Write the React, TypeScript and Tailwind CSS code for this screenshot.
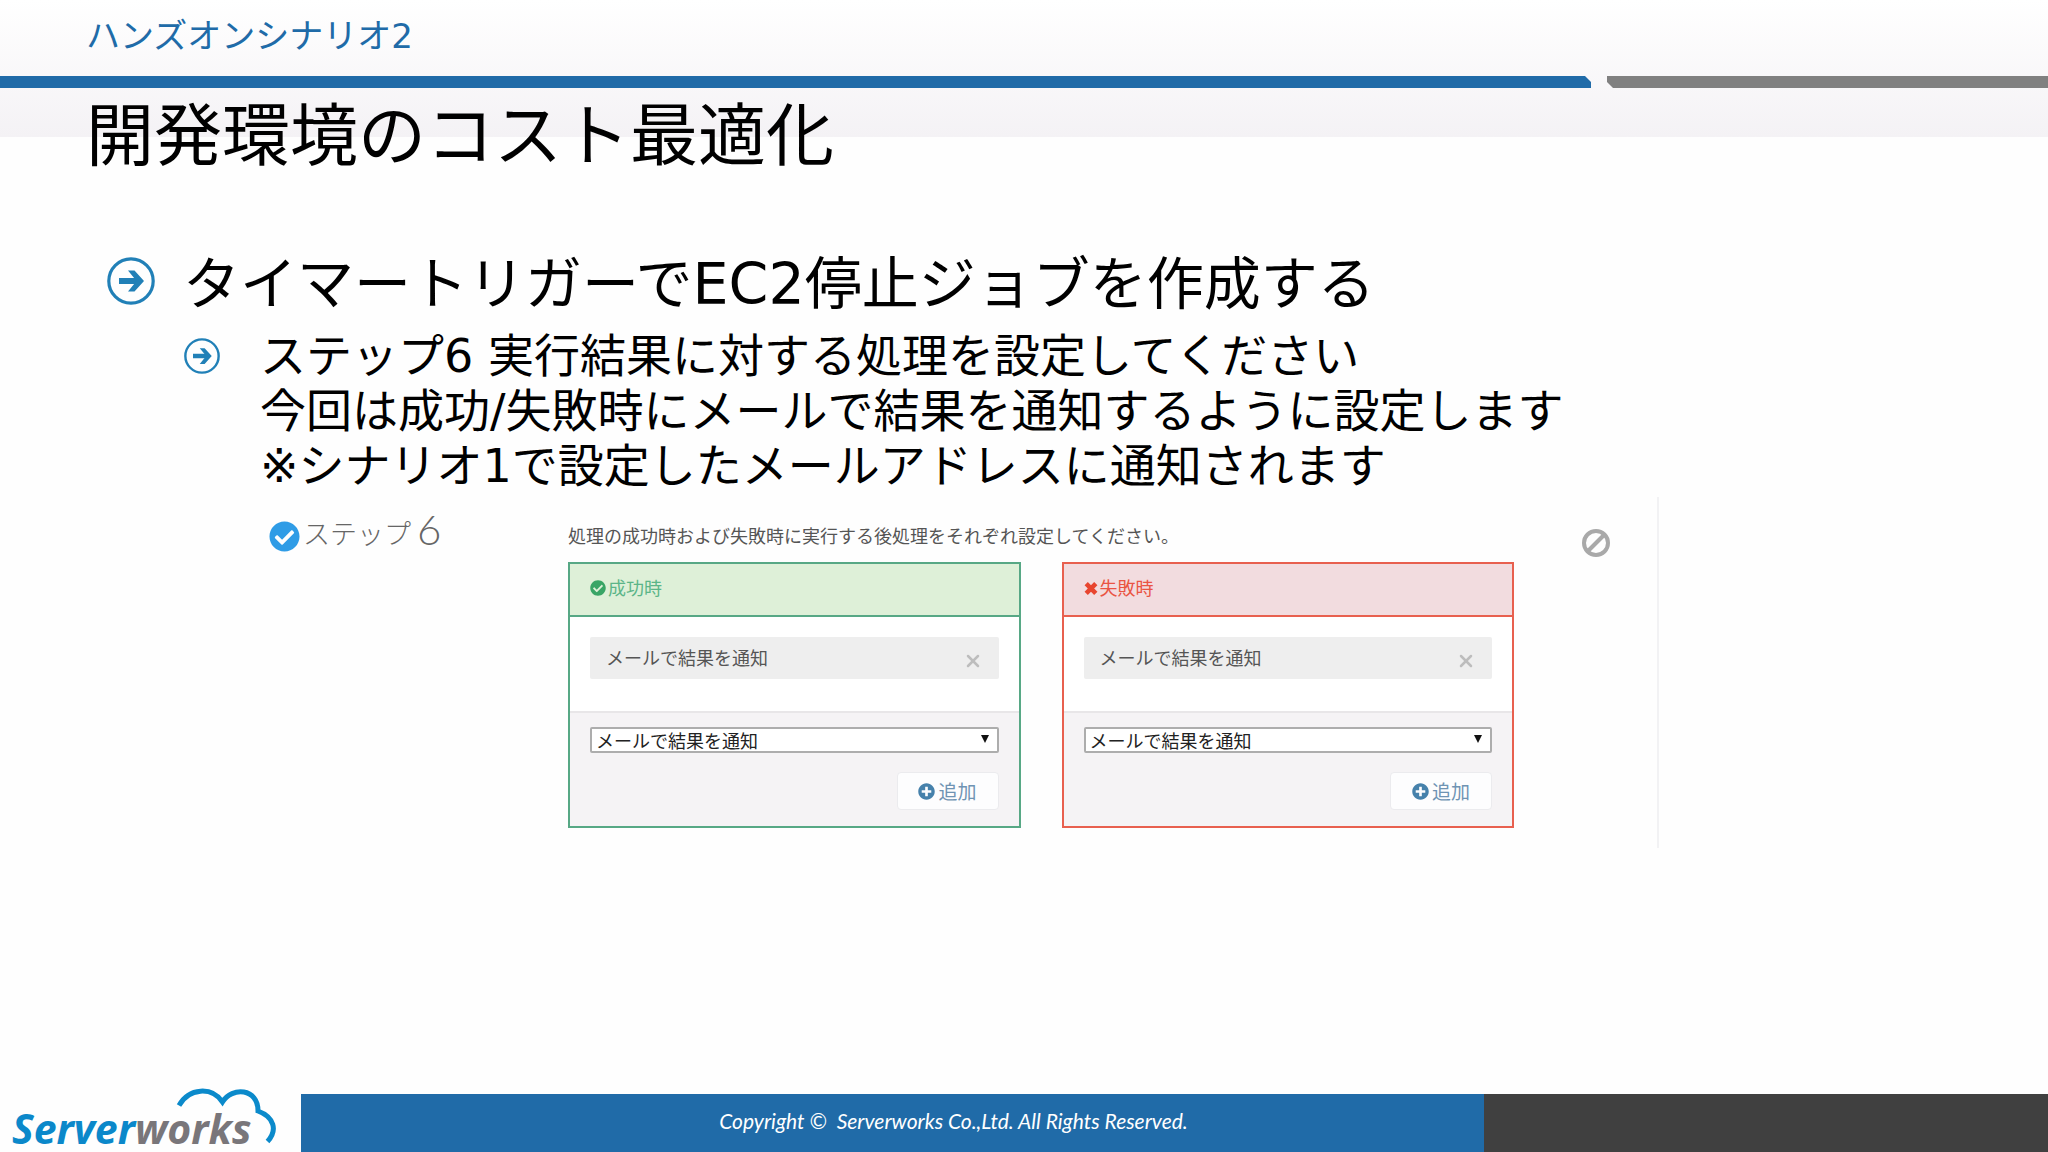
import React from 'react';
import { FaCheckCircle, FaPlusCircle } from 'react-icons/fa';
import { X } from 'lucide-react';

interface ResultPanelProps {
  id: string;
  title: string;
  icon: React.ReactNode;
  borderClass: string;
  headerClass: string;
}

const ACTION = 'メールで結果を通知';

const ArrowBullet: React.FC<{ className: string }> = ({ className }) => (
  <svg viewBox="0 0 48 48" className={className} fill="none" stroke="#2180b7" aria-hidden="true">
    <circle cx="24" cy="24" r="22.2" strokeWidth="3.2" />
    <path d="M12 24h21" strokeWidth="6" />
    <path d="M21 13.5H27.5L37 24L27.5 34.5H21L29.5 24Z" fill="#2180b7" stroke="none" />
  </svg>
);

const BanIcon: React.FC = () => (
  <svg viewBox="0 0 28 28" className="h-7 w-7" fill="none" stroke="#a9a9a9" strokeWidth="4" aria-hidden="true">
    <circle cx="14" cy="14" r="12" />
    <path d="M5.5 22.5L22.5 5.5" />
  </svg>
);

const CrossIcon: React.FC = () => (
  <svg viewBox="0 0 14 16" className="h-4 w-[14px]" fill="none" stroke="#e8452f" strokeWidth="4.6" aria-hidden="true">
    <path d="M2.2 3.7L11.8 13.3M11.8 3.7L2.2 13.3" />
  </svg>
);

const Logo: React.FC = () => (
  <div className="relative flex items-end pb-1 pl-3">
    <span className="font-['Noto_Sans','Open_Sans',sans-serif] text-[41px] leading-[40px] font-bold italic text-[#0b88ca]">
      Server<span className="text-[#79767a]">works</span>
    </span>
    <svg
      viewBox="0 0 320 82"
      className="absolute bottom-0 left-0 h-[82px] w-[320px]"
      fill="none"
      stroke="#0b8acb"
      strokeWidth="5"
      strokeLinejoin="miter"
      aria-hidden="true"
    >
      <path d="M179 35.5C189 17.5 212 16.5 222.5 32C232 16.5 258 18 258 41C274 47 278 60 267.5 71.5" />
    </svg>
  </div>
);

const ResultPanel: React.FC<ResultPanelProps> = ({ id, title, icon, borderClass, headerClass }) => (
  <section className={`min-w-0 flex-1 border-2 bg-white ${borderClass}`}>
    <h4 className={`flex h-[53px] items-center gap-[2px] border-b-2 px-5 pb-1 text-[18px] ${borderClass} ${headerClass}`}>
      {icon}
      {title}
    </h4>
    <div className="px-5 pt-5 pb-8">
      <div className="flex h-[42px] items-center justify-between rounded-xs bg-[#eeeeee] px-4 pb-[2px] text-[18px] text-[#555555]">
        {ACTION}
        <button type="button" aria-label="削除" className="pt-2 text-[#bdbdbd]">
          <X size={20} strokeWidth={3} />
        </button>
      </div>
    </div>
    <div className="flex flex-col items-end gap-[19px] border-t-2 border-[#e8e6e8] bg-[#f5f3f5] px-5 pt-[14px] pb-4">
      <div className="relative w-full">
        <select
          id={id}
          aria-label={title}
          className="block h-[26px] w-full appearance-none rounded-xs border-2 border-[#adadad] bg-white pl-1 text-[18px] leading-[22px] text-[#222222]"
        >
          <option>{ACTION}</option>
        </select>
        <svg viewBox="0 0 8 8" className="pointer-events-none absolute top-2 right-[10px] h-2 w-2" aria-hidden="true">
          <path d="M0 0H8L4 8Z" fill="#111111" />
        </svg>
      </div>
      <button
        type="button"
        className="flex h-[38px] w-[102px] items-center justify-center gap-[3px] rounded-sm border border-[#ebebee] bg-[#fdfdfe] text-[19px] text-[#6f93b3]"
      >
        <FaPlusCircle size={17} className="text-[#4681ab]" />
        追加
      </button>
    </div>
  </section>
);

export default function App() {
  return (
    <div className="flex min-h-screen flex-col bg-[#fefefe] bg-linear-to-b from-white to-[#f4f2f5] bg-[length:100%_137px] bg-no-repeat font-['DejaVu_Sans','Noto_Sans_CJK_JP',sans-serif] text-black">
      <header>
        <p className="h-[76px] px-[86px] pt-[10px] text-[34px] leading-[52px] text-[#206ba8]">ハンズオンシナリオ2</p>
        <div className="grid grid-cols-[1591fr_441fr] gap-4">
          <div className="h-3 bg-[#206ba8] [clip-path:polygon(0_0,calc(100%-6px)_0,100%_6px,100%_100%,0_100%)]" />
          <div className="h-3 bg-[#808080] [clip-path:polygon(0_0,100%_0,100%_100%,6px_100%,0_6px)]" />
        </div>
        <h1 className="px-[86px] text-[68px] leading-[98px]">開発環境のコスト最適化</h1>
      </header>

      <main className="flex-1 pt-[62px]">
        <div className="flex items-start gap-7 pl-[107px]">
          <ArrowBullet className="mt-[9px] h-12 w-12 shrink-0" />
          <h2 className="text-[57px] leading-[72px]">タイマートリガーでEC2停止ジョブを作成する</h2>
        </div>
        <div className="mt-[9px] flex items-start gap-10 pl-[184px]">
          <ArrowBullet className="mt-[9px] h-9 w-9 shrink-0" />
          <p className="text-[46px] leading-[55px]">
            ステップ6 実行結果に対する処理を設定してください
            <br />
            今回は成功/失敗時にメールで結果を通知するように設定します
            <br />
            ※シナリオ1で設定したメールアドレスに通知されます
          </p>
        </div>

        {/* Step form */}
        <div className="mt-[3px] ml-[261px] flex max-w-[1398px] items-start border-r-2 border-[#f2f2f4] pb-5 font-['Noto_Sans_CJK_JP',sans-serif]">
          <h3 className="flex w-[307px] shrink-0 items-start pt-[14px] pl-2 text-[27px] leading-[44px] font-light text-[#666666]">
            <FaCheckCircle size={31} className="mt-[10px] mr-[3px] text-[#2f9ce6]" />
            ステップ
            <span className="pl-[6px] font-['Lato',sans-serif] text-[42px] leading-[36px]">6</span>
          </h3>
          <div className="min-w-0 flex-1 pt-6">
            <p className="text-[18px] leading-[28px] text-[#555555]">
              処理の成功時および失敗時に実行する後処理をそれぞれ設定してください。
            </p>
            <div className="mt-[13px] flex gap-[41px]">
              <ResultPanel
                id="on-success"
                title="成功時"
                icon={<FaCheckCircle size={16} className="text-[#39a566]" />}
                borderClass="border-[#57a885]"
                headerClass="bg-[#def0d8] text-[#5bb588]"
              />
              <ResultPanel
                id="on-failure"
                title="失敗時"
                icon={<CrossIcon />}
                borderClass="border-[#e8604f]"
                headerClass="bg-[#f2dcdf] text-[#ea5443]"
              />
            </div>
          </div>
          <div className="flex w-[143px] shrink-0 justify-end pt-8 pr-[47px]">
            <BanIcon />
          </div>
        </div>
      </main>

      <footer className="grid h-[58px] grid-cols-[301px_1183fr_564fr] items-stretch">
        <Logo />
        <div className="flex items-center justify-center bg-[#206ba8] pb-1 pl-[122px] font-['Lato',sans-serif] text-[21px] whitespace-pre text-white italic">
          {'Copyright ©  Serverworks Co.,Ltd. All Rights Reserved.'}
        </div>
        <div className="bg-[#404040]" />
      </footer>
    </div>
  );
}
